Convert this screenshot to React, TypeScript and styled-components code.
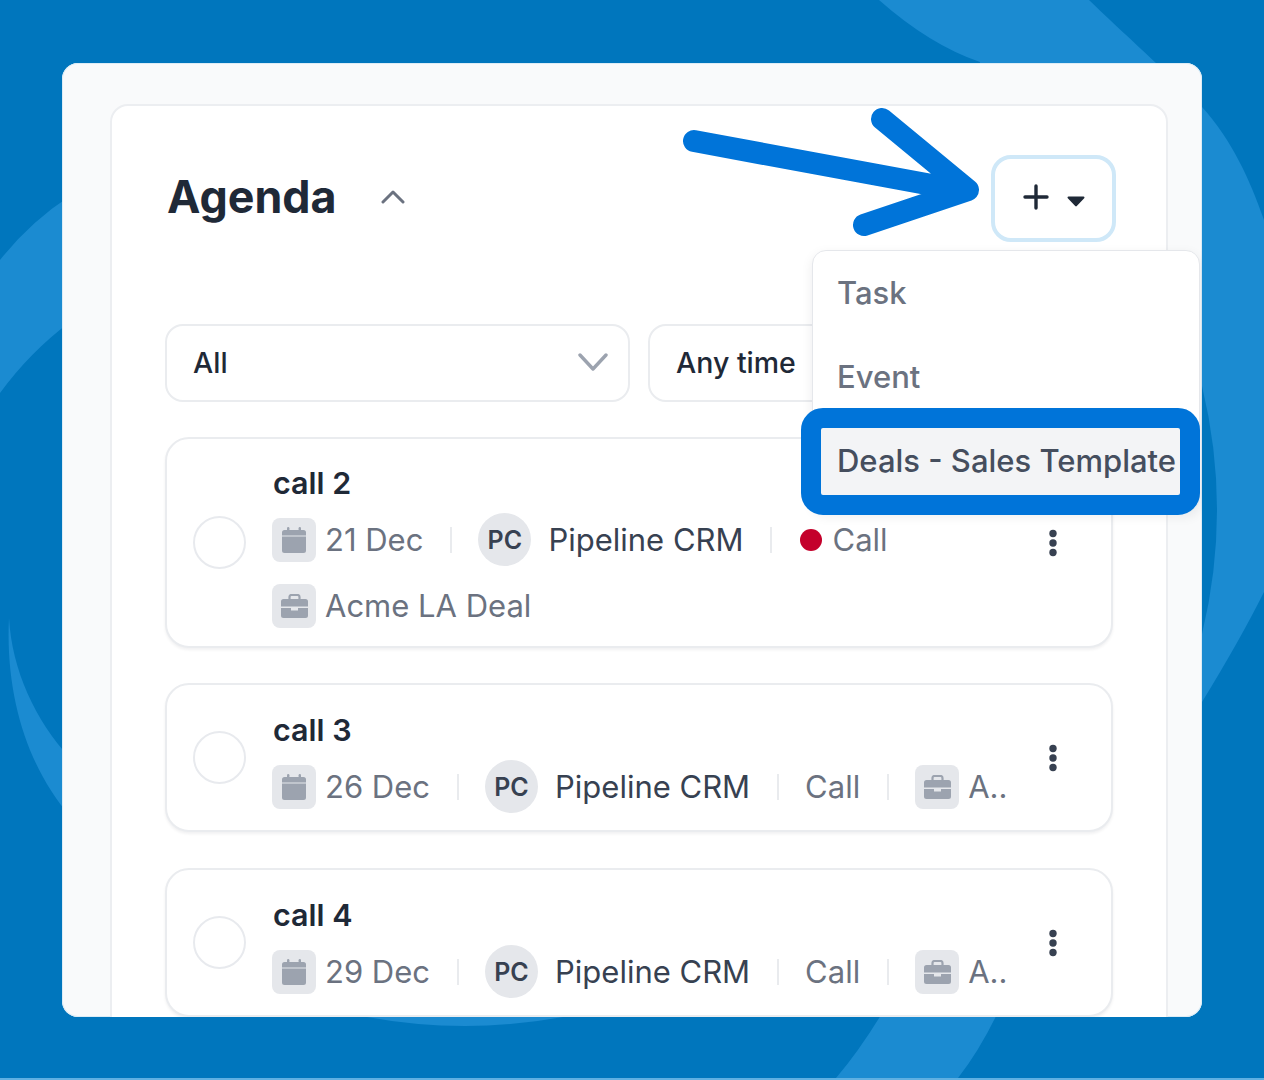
import styled, { createGlobalStyle } from "styled-components";

const GlobalStyle = createGlobalStyle`
  html {
    background: #5fb0e2;
  }
  body {
    margin: 0;
    font-family: Inter, "Liberation Sans", sans-serif;
  }
`;

const Page = styled.div`
  position: relative;
  height: 1078px;
  padding: 63px 0 0 62px;
  box-sizing: border-box;
  background: #0076bd;
  overflow: hidden;
`;

const Swirl = styled.svg`
  position: absolute;
  top: 0;
  left: 0;
`;

const Sheet = styled.div`
  position: relative;
  width: 1140px;
  height: 954px;
  box-sizing: border-box;
  padding: 41px 34px 0 48px;
  background: #f9fafb;
  border-radius: 16px;
  box-shadow: inset 0 0 0 1px #dcecf6;
  overflow: hidden;
`;

const Panel = styled.section`
  box-sizing: border-box;
  height: 960px;
  padding: 50px 53px 0;
  background: #fff;
  border: 2px solid #eceef1;
  border-radius: 18px 18px 0 0;
`;

const Header = styled.header`
  position: relative;
  display: flex;
  align-items: center;
  height: 85px;
`;

const Title = styled.h1`
  margin: 0 0 4px 2px;
  font-size: 44.8px;
  line-height: 52px;
  font-weight: 700;
  color: #1f2937;
`;

const Collapse = styled.svg`
  margin: 0 0 5px 43px;
  flex: none;
`;

const AddButton = styled.button`
  display: flex;
  align-items: center;
  justify-content: center;
  gap: 18px;
  flex: none;
  width: 125px;
  height: 87px;
  margin: 0 -3px 0 auto;
  padding: 0;
  background: #fff;
  border: 4px solid #cfe8f8;
  border-radius: 20px;
`;

const PlusIcon = styled.svg`
  margin-bottom: 3px;
`;

const CaretIcon = styled.svg`
  margin-top: 5px;
`;

const Arrow = styled.svg`
  position: absolute;
  top: -56px;
  left: 504px;
`;

const Menu = styled.div`
  position: absolute;
  top: 94px;
  left: 647px;
  z-index: 3;
  box-sizing: border-box;
  width: 388px;
  height: 262px;
  background: #fff;
  border: 1px solid #e5e7eb;
  border-radius: 14px;
  box-shadow: 0 4px 12px rgba(17, 24, 39, 0.08);
`;

const MenuItem = styled.div`
  height: 84px;
  padding-left: 24px;
  font-size: 31px;
  line-height: 84px;
  font-weight: 500;
  color: #6b7280;
`;

const HighlightedItem = styled.div`
  position: absolute;
  top: 157px;
  left: -12px;
  width: 399px;
  height: 107px;
  box-sizing: border-box;
  padding-left: 16px;
  border: 20px solid #0074d9;
  border-radius: 22px;
  background: #f3f4f6;
  font-size: 31px;
  line-height: 65px;
  font-weight: 500;
  color: #454e5e;
  white-space: nowrap;
`;

const Filters = styled.div`
  display: grid;
  grid-template-columns: 465px 1fr;
  gap: 18px;
  margin-top: 83px;
`;

const Filter = styled.div`
  display: flex;
  align-items: center;
  justify-content: space-between;
  box-sizing: border-box;
  height: 78px;
  padding: 0 20px 2px 26px;
  border: 2px solid #eaecef;
  border-radius: 18px;
  font-size: 28.5px;
  font-weight: 500;
  color: #1f2937;
`;

const Tasks = styled.div`
  display: flex;
  flex-direction: column;
  gap: 35px;
  margin-top: 35px;
`;

const TaskCard = styled.article`
  display: flex;
  align-items: center;
  gap: 26px;
  box-sizing: border-box;
  height: 211px;
  padding: 0 48px 0 26px;
  background: #fff;
  border: 2px solid #eaecef;
  border-radius: 24px;
  box-shadow: 0 2px 3px rgba(17, 24, 39, 0.06);
`;

const CompactCard = styled(TaskCard)`
  height: 149px;
  margin-bottom: 1px;
`;

const Check = styled.span`
  flex: none;
  width: 53px;
  height: 53px;
  box-sizing: border-box;
  border: 2px solid #e8eaee;
  border-radius: 50%;
`;

const TaskBody = styled.div<{ $top: number }>`
  flex: 1;
  align-self: flex-start;
  min-width: 0;
  padding-top: ${({ $top }) => $top}px;
`;

const TaskName = styled.div`
  margin: 0 0 11px 1px;
  font-size: 30.5px;
  line-height: 38px;
  font-weight: 600;
  color: #1f2937;
`;

const Meta = styled.div`
  display: flex;
  align-items: center;
  height: 53px;
  & + & {
    margin-top: 13px;
  }
`;

const Group = styled.div`
  display: flex;
  align-items: center;
  gap: 9px;
`;

const Tile = styled.span`
  display: flex;
  align-items: center;
  justify-content: center;
  width: 44px;
  height: 44px;
  border-radius: 8px;
  background: #e5e7eb;
`;

const Muted = styled.span`
  font-size: 31px;
  color: #6b7280;
  white-space: nowrap;
`;

const Sep = styled.span`
  flex: none;
  width: 2px;
  height: 26px;
  margin: 0 26.5px;
  background: #e9ebee;
`;

const Avatar = styled.span`
  display: flex;
  align-items: center;
  justify-content: center;
  flex: none;
  width: 53px;
  height: 53px;
  border-radius: 50%;
  background: #e5e7eb;
  font-size: 25px;
  font-weight: 600;
  color: #374151;
`;

const Owner = styled.span`
  margin-left: 17px;
  font-size: 31px;
  color: #374151;
  white-space: nowrap;
`;

const Dot = styled.span`
  flex: none;
  width: 22px;
  height: 22px;
  margin: 0 10px 0 2px;
  border-radius: 50%;
  background: #c4002b;
`;

const Kebab = styled.svg`
  flex: none;
`;

function Chevron({ up }: { up?: boolean }) {
  return up ? (
    <Collapse width="26" height="16" viewBox="0 0 26 16" fill="none">
      <path d="M3 14 L13 4 L23 14" stroke="#6b7280" strokeWidth="3" strokeLinecap="round" strokeLinejoin="round" />
    </Collapse>
  ) : (
    <svg width="30" height="20" viewBox="0 0 30 20" fill="none">
      <path d="M2 3 L15 17 L28 3" stroke="#9ca3af" strokeWidth="3.4" strokeLinecap="round" strokeLinejoin="round" />
    </svg>
  );
}

function CalendarIcon() {
  return (
    <svg width="24" height="26" viewBox="0 0 24 26" fill="#9ca3af">
      <rect x="5" y="0" width="2.4" height="6" rx="1.2" />
      <rect x="16.6" y="0" width="2.4" height="6" rx="1.2" />
      <path d="M2.5 3 H21.5 A2.5 2.5 0 0 1 24 5.5 V8.4 H0 V5.5 A2.5 2.5 0 0 1 2.5 3 Z" />
      <path d="M0 9.6 H24 V23.5 A2.5 2.5 0 0 1 21.5 26 H2.5 A2.5 2.5 0 0 1 0 23.5 Z" />
    </svg>
  );
}

function BriefcaseIcon() {
  return (
    <svg width="27" height="24" viewBox="0 0 27 24" fill="#9ca3af">
      <path d="M8.5 6 V3 A2 2 0 0 1 10.5 1 H16.5 A2 2 0 0 1 18.5 3 V6" fill="none" stroke="#9ca3af" strokeWidth="2.2" />
      <path d="M2.5 5 H24.5 A2.5 2.5 0 0 1 27 7.5 V12.5 H0 V7.5 A2.5 2.5 0 0 1 2.5 5 Z" />
      <path d="M0 14 H10 V16.5 H17 V14 H27 V21.5 A2.5 2.5 0 0 1 24.5 24 H2.5 A2.5 2.5 0 0 1 0 21.5 Z" />
    </svg>
  );
}

function DotsIcon() {
  return (
    <Kebab width="20" height="28" viewBox="0 0 20 28" fill="#374151">
      <circle cx="10" cy="4.5" r="3.7" />
      <circle cx="10" cy="14" r="3.7" />
      <circle cx="10" cy="23.5" r="3.7" />
    </Kebab>
  );
}

function DateGroup({ date }: { date: string }) {
  return (
    <Group>
      <Tile>
        <CalendarIcon />
      </Tile>
      <Muted>{date}</Muted>
    </Group>
  );
}

function DealGroup({ label }: { label: string }) {
  return (
    <Group>
      <Tile>
        <BriefcaseIcon />
      </Tile>
      <Muted>{label}</Muted>
    </Group>
  );
}

function OwnerGroup() {
  return (
    <>
      <Avatar>PC</Avatar>
      <Owner>Pipeline CRM</Owner>
    </>
  );
}

function CompactTask({ name, date }: { name: string; date: string }) {
  return (
    <CompactCard>
      <Check />
      <TaskBody $top={26}>
        <TaskName>{name}</TaskName>
        <Meta>
          <DateGroup date={date} />
          <Sep />
          <OwnerGroup />
          <Sep />
          <Muted>Call</Muted>
          <Sep />
          <DealGroup label="A.." />
        </Meta>
      </TaskBody>
      <DotsIcon />
    </CompactCard>
  );
}

export default function App() {
  return (
    <>
      <GlobalStyle />
      <Page>
        <Swirl width="1264" height="1078" viewBox="0 0 1264 1078" fill="#1b8bd1">
          <path d="M879 0 H1089 C1120 30 1170 75 1202 107 C1232 140 1250 180 1264 220 V592 Q1240 640 1202 702 L900 720 L980 62 Q930 45 879 0 Z" />
          <path d="M1190 386 H1202 Q1232 510 1202 634 H1190 Z" fill="#0076bd" />
          <path d="M0 260 Q30 222 70 196 V322 Q30 352 0 393 Z" />
          <path d="M9 618 C12 670 35 720 70 758 V816 C30 770 5 700 9 618 Z" />
          <path d="M367 1010 V1017 Q465 1035 563 1017 V1010 Z" />
          <path d="M884 1010 H999 Q980 1050 958 1078 H836 Q860 1050 884 1010 Z" />
        </Swirl>
        <Sheet>
          <Panel>
            <Header>
              <Title>Agenda</Title>
              <Chevron up />
              <AddButton>
                <PlusIcon width="26" height="26" viewBox="0 0 26 26" fill="none">
                  <path d="M13 2 V24 M2 13 H24" stroke="#1f2937" strokeWidth="3.4" strokeLinecap="round" />
                </PlusIcon>
                <CaretIcon width="18" height="11" viewBox="0 0 18 11" fill="#1f2937">
                  <path d="M1.5 0.5 H16.5 A1 1 0 0 1 17.2 2.2 L9.8 10 A1.1 1.1 0 0 1 8.2 10 L0.8 2.2 A1 1 0 0 1 1.5 0.5 Z" />
                </CaretIcon>
              </AddButton>
              <Arrow width="320" height="140" viewBox="0 0 320 140" fill="none">
                <path
                  d="M25 41 L290 90 M213 19 L299 90 L195 125"
                  stroke="#0074d9"
                  strokeWidth="22"
                  strokeLinecap="round"
                  strokeLinejoin="round"
                />
              </Arrow>
              <Menu>
                <MenuItem>Task</MenuItem>
                <MenuItem>Event</MenuItem>
                <HighlightedItem>Deals - Sales Template</HighlightedItem>
              </Menu>
            </Header>

            <Filters>
              <Filter>
                All
                <Chevron />
              </Filter>
              <Filter>
                Any time
                <Chevron />
              </Filter>
            </Filters>

            <Tasks>
              <TaskCard>
                <Check />
                <TaskBody $top={25}>
                  <TaskName>call 2</TaskName>
                  <Meta>
                    <DateGroup date="21 Dec" />
                    <Sep />
                    <OwnerGroup />
                    <Sep />
                    <Dot />
                    <Muted>Call</Muted>
                  </Meta>
                  <Meta>
                    <DealGroup label="Acme LA Deal" />
                  </Meta>
                </TaskBody>
                <DotsIcon />
              </TaskCard>
              <CompactTask name="call 3" date="26 Dec" />
              <CompactTask name="call 4" date="29 Dec" />
            </Tasks>
          </Panel>
        </Sheet>
      </Page>
    </>
  );
}
